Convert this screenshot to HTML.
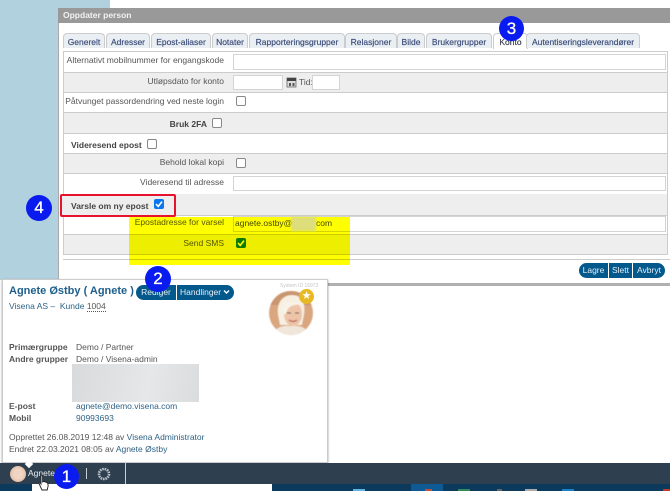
<!DOCTYPE html>
<html><head><meta charset="utf-8">
<style>
html,body{margin:0;padding:0;background:#fff}
#r{position:relative;width:670px;height:491px;overflow:hidden;background:#fff;font-family:"Liberation Sans",sans-serif;font-size:8.5px;color:#444}
#r div,#r span.a,#r svg{position:absolute}
.t{white-space:nowrap;filter:blur(.35px)}
.tab{top:33px;height:15px;background:#e9eff3;border:1px solid #ccc;border-bottom:none;border-radius:4px 4px 0 0;color:#3a4a78;line-height:17px;text-align:center;box-sizing:border-box;white-space:nowrap;font-size:8.5px;filter:blur(.35px);-webkit-text-stroke:.15px #3a4a78}
.row{left:64px;width:603px;box-sizing:border-box}
.g{background:#eeeeee}
.line{left:63px;width:605px;height:1px;background:#ccc}
.lab{right:446px;white-space:nowrap;color:#555;filter:blur(.35px);font-size:8.5px}
.inp{background:#fff;border:1px solid #d4d4d4;box-sizing:border-box}
.cb{width:10px;height:10px;border:1px solid #888;border-radius:2px;background:#fff;box-sizing:border-box}
.b{color:#444;font-weight:700;white-space:nowrap;filter:blur(.35px);font-size:8.5px}
.badge{border-radius:50%;background:#0a1bf0;color:#fff;font-size:17px;text-align:center;-webkit-text-stroke:.3px #fff}
.btn{background:#03588c;color:#e6eef4;font-size:8.5px;text-align:center;line-height:14px;height:15px;box-sizing:border-box;white-space:nowrap;filter:blur(.2px)}
.link{color:#2d6285;white-space:nowrap;filter:blur(.35px);font-size:8.5px}
.k{color:#555;font-weight:700;white-space:nowrap;filter:blur(.35px);font-size:8.5px}
.v{color:#555;white-space:nowrap;filter:blur(.35px);font-size:8.5px}
</style></head><body>
<div id="r">
<div style="left:0;top:0;width:110px;height:280px;background:#b1d1de"></div>
<div style="left:58px;top:8px;width:612px;height:275px;background:#fff;border-left:1px solid #aaa;box-sizing:border-box"></div>
<div style="left:58px;top:8px;width:612px;height:15px;background:#999"></div>
<div class="t" style="left:63px;top:10px;color:#f2f2f2;font-weight:700;font-size:8.5px;line-height:11px">Oppdater person</div>
<div style="left:58px;top:283px;width:612px;height:3px;background:#b0b0b0"></div>

<div class="tab" style="left:63px;width:42px">Generelt</div>
<div class="tab" style="left:106px;width:44px">Adresser</div>
<div class="tab" style="left:151px;width:60px">Epost-aliaser</div>
<div class="tab" style="left:212px;width:36px">Notater</div>
<div class="tab" style="left:249px;width:96px">Rapporteringsgrupper</div>
<div class="tab" style="left:345px;width:52px">Relasjoner</div>
<div class="tab" style="left:397px;width:28px">Bilde</div>
<div class="tab" style="left:426px;width:66px">Brukergrupper</div>
<div class="tab" style="left:493px;width:35px;height:16px;background:#fff;color:#333">Konto</div>
<div class="tab" style="left:526px;width:114px">Autentiseringsleverandører</div>

<!-- table -->
<div style="left:63px;top:51px;width:605px;height:204px;border:1px solid #ccc;box-sizing:border-box;background:#fff"></div>
<div class="row g" style="top:73px;height:19px"></div>
<div class="row g" style="top:113px;height:20px"></div>
<div class="row g" style="top:154px;height:19px"></div>
<div class="row g" style="top:194px;height:21px"></div>
<div class="row g" style="top:235px;height:19px"></div>
<div class="line" style="top:72px"></div>
<div class="line" style="top:92px"></div>
<div class="line" style="top:112px"></div>
<div class="line" style="top:133px"></div>
<div class="line" style="top:153px"></div>
<div class="line" style="top:173px"></div>
<div class="line" style="top:215px"></div>
<div class="line" style="top:234px"></div>
<div class="line" style="top:259px;left:63px;width:607px"></div>

<div class="lab" style="top:55px">Alternativt mobilnummer for engangskode</div>
<div class="inp" style="left:233px;top:54px;width:433px;height:16px"></div>
<div class="lab" style="top:76px">Utløpsdato for konto</div>
<div class="inp" style="left:233px;top:75px;width:50px;height:15px"></div>
<svg style="left:286px;top:77px" width="11" height="11" viewBox="0 0 11 11"><rect x="1" y="1" width="9" height="9" fill="#ddd" stroke="#666" stroke-width=".8"/><rect x="1" y="1" width="9" height="3" fill="#444"/><path d="M3 6h2v3H3zM6.500 6h2v3h-2z" fill="#555"/></svg>
<div class="t" style="left:299px;top:77px;color:#555;font-size:8.5px">Tid:</div>
<div class="inp" style="left:312px;top:75px;width:28px;height:15px"></div>
<div class="lab" style="top:96px">Påtvunget passordendring ved neste login</div>
<div class="cb" style="left:236px;top:96px"></div>
<div class="b" style="right:463px;top:119px">Bruk 2FA</div>
<div class="cb" style="left:212px;top:118px"></div>
<div class="b" style="left:71px;top:140px">Videresend epost</div>
<div class="cb" style="left:147px;top:139px"></div>
<div class="lab" style="top:157px">Behold lokal kopi</div>
<div class="cb" style="left:236px;top:158px"></div>
<div class="lab" style="top:177px">Videresend til adresse</div>
<div class="inp" style="left:233px;top:176px;width:433px;height:15px"></div>

<div class="lab" style="top:217px">Epostadresse for varsel</div>
<div class="inp" style="left:233px;top:216px;width:433px;height:16px"></div>
<div class="t" style="left:235px;top:218px;color:#444;font-size:8.5px">agnete.ostby@</div>
<div class="t" style="left:316px;top:218px;color:#444;font-size:8.5px">com</div>
<div class="lab" style="top:238px">Send SMS</div>
<div style="left:236px;top:238px;width:10px;height:10px;background:#0d7a0d;border-radius:2px"></div>
<svg style="left:236px;top:238px" width="10" height="10" viewBox="0 0 10 10"><path d="M2 5l2.200 2.400L8 2.600" fill="none" stroke="#fff" stroke-width="1.600"/></svg>
<!-- yellow highlight -->
<div style="left:129px;top:217px;width:221px;height:48px;background:#ffff00;mix-blend-mode:multiply"></div>
<div style="left:291px;top:217px;width:25px;height:14px;background:#dddd7c;filter:blur(1px)"></div>

<!-- red -->
<div style="left:60px;top:194px;width:116px;height:23px;border:2px solid #e8122f;border-radius:2px;box-sizing:border-box;background:#eee"></div>
<div class="b" style="left:71px;top:201px">Varsle om ny epost</div>
<div style="left:154px;top:199px;width:10px;height:10px;background:#0a76ee;border-radius:2px"></div>
<svg style="left:154px;top:199px" width="10" height="10" viewBox="0 0 10 10"><path d="M2 5l2.200 2.400L8 2.600" fill="none" stroke="#fff" stroke-width="1.600"/></svg>

<!-- buttons -->
<div class="btn" style="left:579px;top:263px;width:29px;border-radius:8px 0 0 8px">Lagre</div>
<div class="btn" style="left:609px;top:263px;width:23px">Slett</div>
<div class="btn" style="left:633px;top:263px;width:32px;border-radius:0 8px 8px 0">Avbryt</div>

<!-- popup -->
<div style="left:2px;top:279px;width:326px;height:184px;background:#fff;border:1px solid #ccc;box-sizing:border-box;box-shadow:0 1px 2px rgba(0,0,0,.4)"></div>
<div class="t" style="left:9px;top:284px;color:#1e5f8c;font-size:11px;font-weight:700;line-height:14px">Agnete Østby ( Agnete )</div>
<div class="t" style="left:9px;top:301px;color:#2d6285;font-size:8.5px">Visena AS –&nbsp; Kunde <span style="border-bottom:1px dotted #555;color:#555">1004</span></div>
<div class="btn" style="left:136px;top:285px;width:40px;border-radius:8px 0 0 8px">Rediger</div>
<div class="btn" style="left:177px;top:285px;width:57px;border-radius:0 8px 8px 0;text-align:left;padding-left:3px">Handlinger</div>
<svg style="left:223px;top:289px" width="7" height="6" viewBox="0 0 7 6"><path d="M1 1.500l2.500 2.500L6 1.500" fill="none" stroke="#fff" stroke-width="1.400"/></svg>
<div class="t" style="left:280px;top:283px;color:#c4c4c4;font-size:5px">System ID 16973</div>
<svg style="left:269px;top:291px;filter:blur(.5px)" width="44" height="44" viewBox="0 0 44 44">
<defs><clipPath id="c"><circle cx="22" cy="22" r="22"/></clipPath></defs>
<g clip-path="url(#c)"><rect width="44" height="44" fill="#d9a680"/>
<path d="M0 0h44v14H0z" fill="#c99670"/>
<path d="M9 24C7 10 15 4 23 4c9 0 14 6 12 20l-2 10H11z" fill="#f6efe2"/>
<ellipse cx="24" cy="23" rx="9" ry="12" fill="#eec4a8"/>
<path d="M12 18c4-8 14-10 22-4-6-1-12 0-15 4l-3 6z" fill="#f8f3e8"/>
<path d="M20 29q4 3 8 0" stroke="#b5695a" stroke-width="1.200" fill="none"/>
<path d="M18 22h4M26 22h4" stroke="#7a6a60" stroke-width="1"/>
<path d="M4 44c2-8 10-10 18-9 8-1 16 1 18 9z" fill="#f1e6da"/></g></svg>
<div style="left:299px;top:289px;width:15px;height:15px;border-radius:50%;background:#e8b923"></div>
<div style="left:299px;top:289px;width:15px;height:15px;color:#fff;font-size:11px;line-height:15px;text-align:center">★</div>

<div class="k" style="left:9px;top:342px">Primærgruppe</div>
<div class="v" style="left:76px;top:342px">Demo / Partner</div>
<div class="k" style="left:9px;top:354px">Andre grupper</div>
<div class="v" style="left:76px;top:354px">Demo / Visena-admin</div>
<div style="left:72px;top:364px;width:127px;height:38px;background:linear-gradient(100deg,#d8dadb,#e6e7e8 60%,#dadcdd)"></div>
<div class="k" style="left:9px;top:401px">E-post</div>
<div class="link" style="left:76px;top:401px">agnete@demo.visena.com</div>
<div class="k" style="left:9px;top:413px">Mobil</div>
<div class="link" style="left:76px;top:413px">90993693</div>
<div class="v" style="left:9px;top:432px">Opprettet 26.08.2019 12:48 av <span style="color:#2d6285">Visena Administrator</span></div>
<div class="v" style="left:9px;top:444px">Endret 22.03.2021 08:05 av <span style="color:#2d6285">Agnete Østby</span></div>

<!-- taskbar -->
<div style="left:0;top:463px;width:670px;height:21px;background:#2e3f50"></div>
<div style="left:0;top:484px;width:670px;height:7px;background:#0c3a5c"></div>
<div style="left:32px;top:484px;width:240px;height:7px;background:#fff"></div>
<div style="left:411px;top:484px;width:32px;height:7px;background:#0d5a94"></div>
<div style="left:353px;top:489px;width:12px;height:2px;background:#5fb4e0"></div>
<div style="left:425px;top:489px;width:7px;height:2px;background:#c0503a"></div>
<div style="left:458px;top:489px;width:12px;height:2px;background:#2f8a5a"></div>
<div style="left:497px;top:489px;width:5px;height:2px;background:#666"></div>
<div style="left:525px;top:489px;width:12px;height:2px;background:#aaa"></div>
<div style="left:562px;top:489px;width:12px;height:2px;background:#1a7fc4"></div>
<div style="left:663px;top:489px;width:7px;height:2px;background:#c0392b"></div>
<div style="left:26px;top:461px;width:6px;height:6px;background:#fff;transform:rotate(45deg)"></div>
<div style="left:10px;top:466px;width:16px;height:16px;border-radius:50%;background:radial-gradient(circle,#f0d5c5 0 40%,#d9a988)"></div>
<div class="t" style="left:28px;top:468px;color:#e8eef2;font-size:8.5px">Agnete</div>
<svg style="left:38px;top:474px" width="12" height="17" viewBox="0 0 12 17"><path d="M3 1.500c.8-.8 1.600 0 1.600.8V8l1-.5 1.200.3 1.200.4 1.600.8.600 2.500-1 4.500H4L1.200 10c-.5-1 .5-1.600 1.200-1L3 10z" fill="#fff" stroke="#222" stroke-width=".9"/></svg>
<div style="left:86px;top:468px;width:1px;height:11px;background:#c8ced3"></div>
<div style="left:125px;top:463px;width:1px;height:21px;background:#c8ced3"></div>
<svg style="left:97px;top:467px" width="14" height="14" viewBox="0 0 14 14"><circle cx="7" cy="7" r="5" fill="none" stroke="#b8bfc5" stroke-width="2.600" stroke-dasharray="1.600 .8"/></svg>

<!-- badges -->
<div class="badge" style="left:54px;top:464px;width:25px;height:25px;line-height:25px">1</div>
<div class="badge" style="left:145px;top:266px;width:26px;height:26px;line-height:26px">2</div>
<div class="badge" style="left:499px;top:16px;width:25px;height:25px;line-height:25px">3</div>
<div class="badge" style="left:26px;top:195px;width:26px;height:26px;line-height:26px">4</div>
</div>
</body></html>
